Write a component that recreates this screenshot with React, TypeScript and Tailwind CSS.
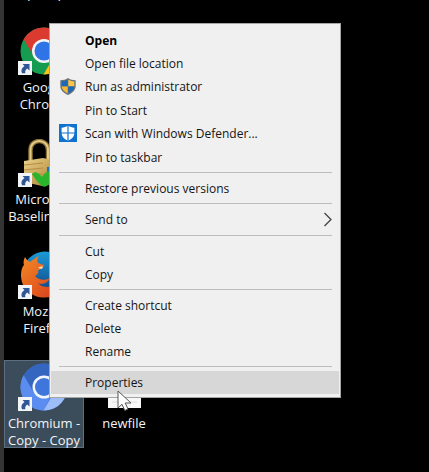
import type { ReactNode } from "react";

type MenuEntry = {
  label: string;
  bold?: boolean;
  active?: boolean;
  submenu?: boolean;
  icon?: ReactNode;
};

function UacShield() {
  return (
    <svg width="16" height="17" viewBox="0 0 16 17">
      <path d="M8 0C6 1.500 3.500 2.200.3 2.300V8c0 4 3 7 7.700 9C12.700 15 15.700 12 15.700 8V2.300C12.500 2.200 10 1.500 8 0Z" fill="#68747f" />
      <path d="M7.700 1.600C6 2.800 4 3.400 1.700 3.600V8.300H7.700Z" fill="#1b68b8" />
      <path d="M8.300 1.600C10 2.800 12 3.400 14.300 3.600V8.300H8.300Z" fill="#fcc544" />
      <path d="M1.700 8.600H7.700V15.500C4.500 14 2 11.600 1.700 8.600Z" fill="#f8b92f" />
      <path d="M14.300 8.600H8.300V15.500C11.500 14 14 11.600 14.300 8.600Z" fill="#1b68b8" />
    </svg>
  );
}

function DefenderShield() {
  return (
    <svg width="18" height="18" viewBox="0 0 18 18">
      <rect width="18" height="18" fill="#0f72cf" />
      <path d="M9 1.500C7 3 5 3.500 2.600 3.700V8.500c0 4 2.500 6.500 6.400 8.300 3.900-1.800 6.400-4.300 6.400-8.300V3.700C13 3.500 11 3 9 1.500Z" fill="#fff" />
      <path d="M9 1V17M2 9H16" stroke="#0f72cf" strokeWidth="1.200" />
    </svg>
  );
}

const menuGroups: MenuEntry[][] = [
  [
    { label: "Open", bold: true },
    { label: "Open file location" },
    { label: "Run as administrator", icon: <UacShield /> },
    { label: "Pin to Start" },
    { label: "Scan with Windows Defender...", icon: <DefenderShield /> },
    { label: "Pin to taskbar" },
  ],
  [{ label: "Restore previous versions" }],
  [{ label: "Send to", submenu: true }],
  [{ label: "Cut" }, { label: "Copy" }],
  [{ label: "Create shortcut" }, { label: "Delete" }, { label: "Rename" }],
  [{ label: "Properties", active: true }],
];

function ChromeIcon() {
  return (
    <svg width="48" height="48" viewBox="0 0 48 48">
      <circle cx="24" cy="24" r="23.500" fill="#169c50" />
      <path d="M24 .5A23.500 23.500 0 0 0 3.600 12.300L14 29.500 24 13.500H45A23.500 23.500 0 0 0 24 .5Z" fill="#db3a30" />
      <path d="M45 13.500H24L34 29.500 23.500 47.500A23.500 23.500 0 0 0 45 13.500Z" fill="#fbc116" />
      <circle cx="24" cy="24" r="12" fill="#f4f4f4" />
      <circle cx="24" cy="24" r="9.500" fill="#2f74e6" />
    </svg>
  );
}

function PadlockIcon() {
  return (
    <svg width="48" height="48" viewBox="0 0 48 48">
      <defs>
        <linearGradient id="brass" x1="0" x2="1" y1="0" y2="1">
          <stop offset="0" stopColor="#ecd28c" />
          <stop offset="1" stopColor="#a87b2c" />
        </linearGradient>
      </defs>
      <path d="M10.500 23V11C10.500-1 28-1 28 11V23" fill="none" stroke="#8d7135" strokeWidth="4.500" />
      <path d="M10.500 23V11C10.500-1 28-1 28 11V23" fill="none" stroke="#e2cb88" strokeWidth="2" />
      <path d="M4 22 23 19 36 22V44L22 47 4 43Z" fill="url(#brass)" />
      <path d="M4 26 23 24M4 31 23 29M4 36 23 35" stroke="#b58c3e" strokeWidth="1" />
      <path d="M27 28H38V40H27Z" fill="#1674c8" />
      <path d="M12 35C16 31 19 35 22 38 25 33 29 31 36 31L32 43C28 46 26 49 22 47 18 44 15 40 12 35Z" fill="#2ab52c" />
    </svg>
  );
}

function FirefoxIcon() {
  return (
    <svg width="48" height="48" viewBox="0 0 48 48">
      <defs>
        <linearGradient id="globe" x1="0" x2="0" y1="0" y2="1">
          <stop offset="0" stopColor="#1a9bd8" />
          <stop offset="1" stopColor="#123b7a" />
        </linearGradient>
        <linearGradient id="fox" x1="0" x2="1" y1="0" y2="1">
          <stop offset="0" stopColor="#f48a25" />
          <stop offset="1" stopColor="#d63a1c" />
        </linearGradient>
      </defs>
      <circle cx="25" cy="23" r="22.500" fill="url(#globe)" />
      <path d="M5 6C6 8 8 10 10 11 13 9 16 6 19 5 17 8 17 10 18 12 20 13 22 13 24 14 24 17 19 18 18 20 19 22 17 24 15 25 18 29 25 30 30 27 27 33 22 34 18 32 23 38 32 36 40 34V42C22 53 1 43 1 24 1 20 2 16 4 14 3 11 4 8 5 6Z" fill="url(#fox)" />
      <path d="M18 17C20 15 22 16 23 15L22 18Z" fill="#f7dfb9" />
    </svg>
  );
}

function ChromiumIcon() {
  return (
    <svg width="48" height="48" viewBox="0 0 48 48">
      <circle cx="24" cy="24" r="23.500" fill="#4777d9" />
      <path d="M24 .5A23.500 23.500 0 0 0 3.600 12.300L14 29.500 24 13.500H45A23.500 23.500 0 0 0 24 .5Z" fill="#3566bf" />
      <path d="M3.600 12.300A23.500 23.500 0 0 0 23.500 47.500L32 31 14 30Z" fill="#5b8df0" />
      <path d="M45 13.500H24L34 29.500 23.500 47.500A23.500 23.500 0 0 0 45 13.500Z" fill="#9dbdf9" />
      <circle cx="24" cy="24" r="11.500" fill="#f1f5fc" />
      <circle cx="24" cy="24" r="9" fill="#3f76dc" />
    </svg>
  );
}

function ShortcutArrow() {
  return (
    <svg className="absolute -left-0.5 bottom-0" width="14" height="14" viewBox="0 0 14 14">
      <rect width="14" height="14" fill="#f3f4f6" />
      <path d="M4.500 3H11.500V9.500L9.200 7.400C7.500 8.700 7 10 7.300 12.300H4C2.700 9 4 6.700 6.500 5Z" fill="#2f5596" />
    </svg>
  );
}

const shortcuts = [
  { lines: ["Google", "Chrome"], icon: <ChromeIcon /> },
  { lines: ["Microsoft", "Baseline S..."], icon: <PadlockIcon /> },
  { lines: ["Mozilla", "Firefox"], icon: <FirefoxIcon /> },
  { lines: ["Chromium -", "Copy - Copy"], icon: <ChromiumIcon />, selected: true },
];

function IconLabel({ lines }: { lines: string[] }) {
  return (
    <span className="mt-1 text-center text-[13px] leading-[17px] whitespace-nowrap text-gray-100">
      {lines.map((line) => (
        <span key={line} className="block">
          {line}
        </span>
      ))}
    </span>
  );
}

function ContextMenu() {
  return (
    <div
      role="menu"
      className="absolute top-[23px] left-[49px] w-[292px] border border-[#a5a5a5] bg-[#f0f0f0] pt-[5px] pb-[3px] text-xs text-[#151515]"
    >
      {menuGroups.map((group, i) => (
        <div key={group[0].label} role="group">
          {i > 0 && <hr className="mt-[3px] mr-2 mb-1 ml-[9px] border-[#bdbdbd]" />}
          {group.map((entry) => (
            <button
              key={entry.label}
              role="menuitem"
              className={`mx-px flex w-[288px] items-center text-left ${
                entry.icon || entry.submenu ? "h-6" : "h-[23px]"
              } ${entry.active ? "bg-[#d7d7d7]" : ""} ${entry.bold ? "font-bold text-black" : ""}`}
            >
              <span className="flex w-[34px] shrink-0 justify-center pb-0.5">{entry.icon}</span>
              <span className="flex-1 whitespace-nowrap">{entry.label}</span>
              {entry.submenu && (
                <svg className="mr-1.5" width="10" height="16" viewBox="0 0 10 16">
                  <path d="M1.500 1 8 7.500 1.500 14" fill="none" stroke="#444" strokeWidth="1.300" />
                </svg>
              )}
            </button>
          ))}
        </div>
      ))}
    </div>
  );
}

export default function App() {
  return (
    <div className="relative flex min-h-screen overflow-hidden bg-black font-['Open_Sans','Noto_Sans',sans-serif]">
      <div className="w-1 shrink-0 bg-[#343434]" />
      <div className="-mt-3 flex w-20 shrink-0 flex-col gap-6">
        {/* tail of the row scrolled off the top */}
        <span className="text-center text-[13px] leading-3 text-gray-100">(local)</span>
        {shortcuts.map((item) => (
          <button
            key={item.lines[0]}
            className={`flex h-[88px] flex-col items-center border pt-0.5 ${
              item.selected ? "border-[#5b7183] bg-[#3b4c5a]" : "border-transparent"
            }`}
          >
            <span className="relative">
              {item.icon}
              <ShortcutArrow />
            </span>
            <IconLabel lines={item.lines} />
          </button>
        ))}
      </div>
      <div className="flex w-20 shrink-0 flex-col pt-[360px]">
        <button className="flex h-[88px] flex-col items-center border border-transparent pt-0.5">
          <svg width="48" height="48" viewBox="0 0 48 48">
            <path d="M8 1H41V45H8Z" fill="#f7f7f7" />
            <path d="M12 8H37M12 14H37M12 20H37M12 26H37M12 32H37M12 39H37" stroke="#dcdcdc" />
          </svg>
          <IconLabel lines={["newfile"]} />
        </button>
      </div>
      <ContextMenu />
      <svg className="absolute top-[390px] left-[117px]" width="16" height="22" viewBox="0 0 16 22">
        <path d="M1 1V18L5 14.300 7.800 20.500 11 19 8.200 13H14Z" fill="#fff" stroke="#555" strokeWidth="1" />
      </svg>
    </div>
  );
}
